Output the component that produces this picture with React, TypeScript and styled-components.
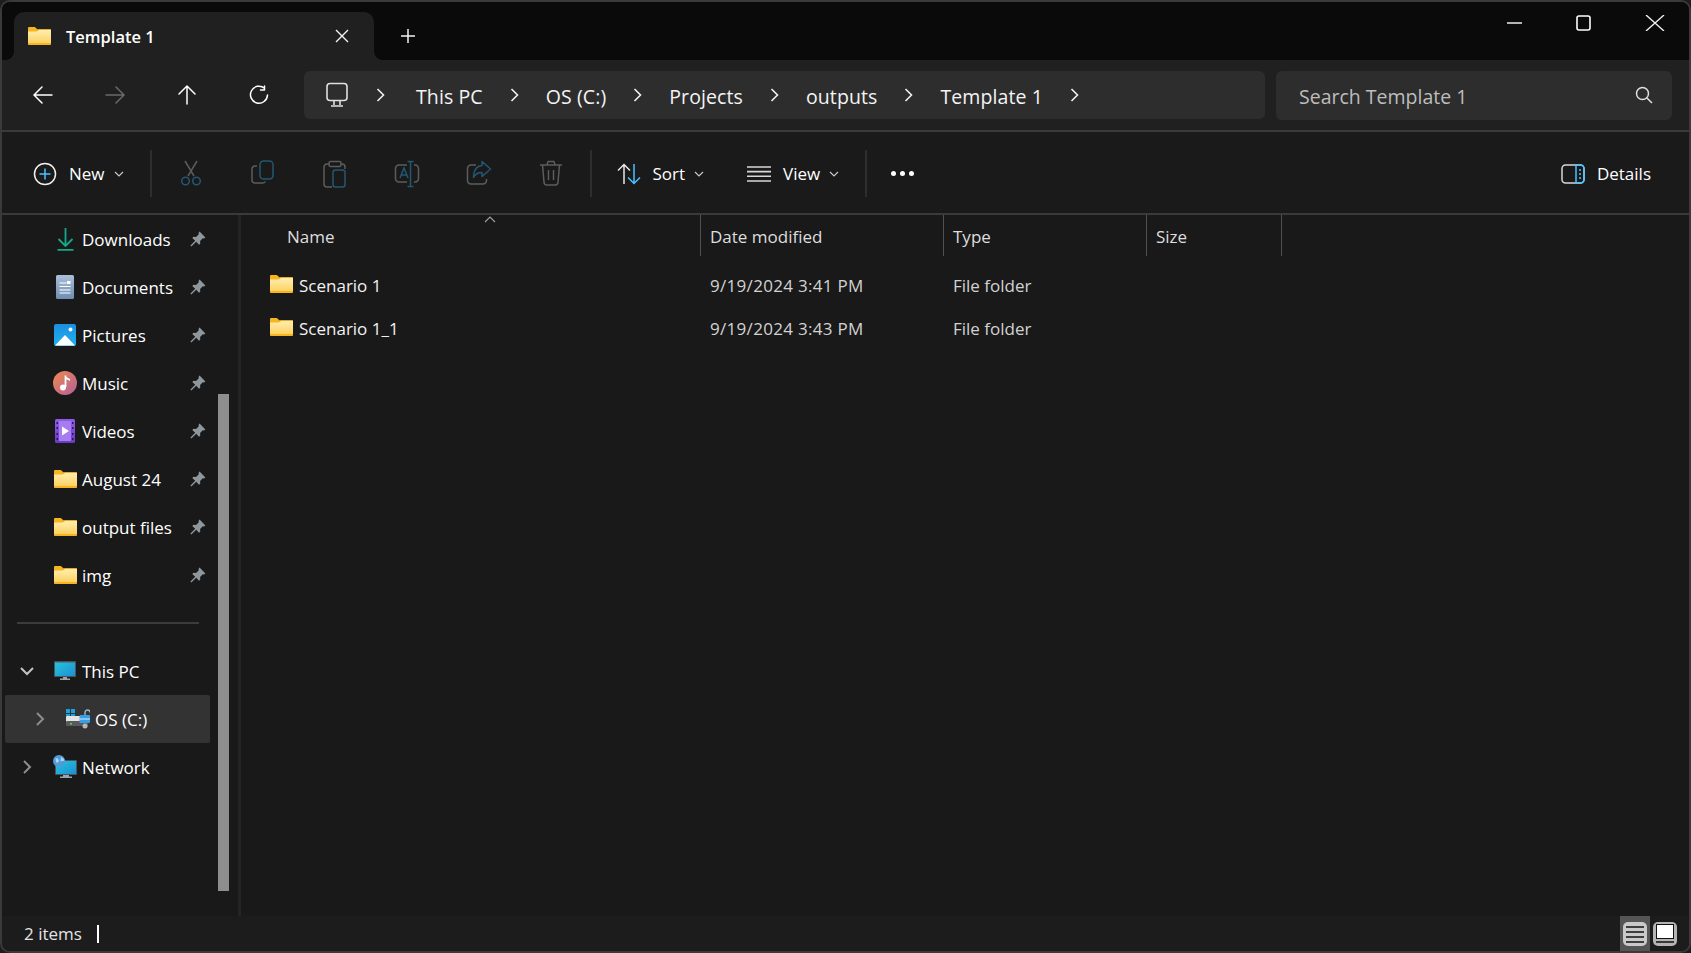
import styled, { createGlobalStyle } from 'styled-components'

const GlobalStyle = createGlobalStyle`
  html, body {
    margin: 0;
    background: #1d1d1d;
  }
  * {
    box-sizing: border-box;
  }
`

const Window = styled.div`
  height: 100vh;
  display: flex;
  flex-direction: column;
  border: 2px solid #3a3a3a;
  border-radius: 10px;
  overflow: hidden;
  background: #191919;
  color: #fff;
  font-family: 'Open Sans', 'Noto Sans', sans-serif;
`

const TitleBar = styled.div`
  height: 58px;
  flex: none;
  display: flex;
  align-items: flex-end;
  padding: 0 24px 0 12px;
  background: #0a0a0a;
`

const Tab = styled.div`
  position: relative;
  width: 360px;
  height: 48px;
  display: flex;
  align-items: center;
  gap: 15px;
  padding: 0 25px 0 14px;
  background: #202020;
  border-radius: 10px 10px 0 0;
  font-size: 16.5px;
  font-weight: 600;

  &::before,
  &::after {
    content: '';
    position: absolute;
    bottom: 0;
    width: 8px;
    height: 8px;
  }
  &::before {
    left: -8px;
    background: radial-gradient(circle at 0 0, transparent 7.5px, #202020 8px);
  }
  &::after {
    right: -8px;
    background: radial-gradient(circle at 100% 0, transparent 7.5px, #202020 8px);
  }
`

const TabClose = styled.span`
  margin-left: auto;
  display: flex;
`

const NewTab = styled.span`
  display: flex;
  margin: 0 0 17px 27px;
`

const WindowControls = styled.div`
  align-self: flex-start;
  margin: 12px 0 0 auto;
  display: flex;
  align-items: center;
  gap: 54px;
`

const NavBar = styled.div`
  height: 72px;
  flex: none;
  display: flex;
  align-items: center;
  padding: 0 17px 0 5px;
  background: #202020;
  border-bottom: 2px solid #3a3a3a;
`

const NavButton = styled.button<{ $off?: boolean }>`
  width: 72px;
  height: 48px;
  flex: none;
  display: flex;
  align-items: center;
  justify-content: center;
  padding: 0;
  border: 0;
  background: none;
  color: ${({ $off }) => ($off ? '#6a6a6a' : '#fff')};
`

const AddressBar = styled.div`
  flex: 1;
  height: 48px;
  margin-left: 9px;
  display: flex;
  align-items: center;
  gap: 27px;
  padding-left: 21px;
  background: #2d2d2d;
  border-radius: 6px;
  font-size: 19.5px;
  letter-spacing: 0.1px;
  color: #f4f4f4;
`

const RootChevron = styled.span`
  display: flex;
  margin-right: 4px;
`

const CrumbLabel = styled.span`
  padding-top: 2px;
`

const SearchBox = styled.div`
  width: 396px;
  height: 49px;
  flex: none;
  margin-left: 11px;
  display: flex;
  align-items: center;
  justify-content: space-between;
  padding: 0 19px 0 23px;
  background: #2d2d2d;
  border-radius: 6px;
  font-size: 19.5px;
  color: #bdbdbd;
`

const SearchLabel = styled.span`
  padding-top: 2px;
`

const Toolbar = styled.div`
  height: 83px;
  flex: none;
  display: flex;
  align-items: center;
  padding-top: 2px;
  background: #1a1a1a;
  border-bottom: 2px solid #3a3a3a;
  font-size: 17px;
`

const ToolButton = styled.div<{ $pad: string }>`
  display: flex;
  align-items: center;
  gap: 12px;
  padding: ${({ $pad }) => $pad};
`

const ActionButton = styled.div`
  width: 72px;
  display: flex;
  justify-content: center;
`

const ActionGroup = styled.div`
  display: flex;
  margin: 0 3px;
`

const Separator = styled.div`
  width: 2px;
  height: 47px;
  flex: none;
  background: #2e2e2e;
`

const Dots = styled.div`
  display: flex;
  gap: 4px;
  margin-left: 24px;
  span {
    width: 5px;
    height: 5px;
    border-radius: 50%;
    background: #fff;
  }
`

const DetailsButton = styled(ToolButton)`
  margin-left: auto;
`

const Body = styled.div`
  flex: 1;
  min-height: 0;
  display: flex;
`

const Sidebar = styled.nav`
  position: relative;
  width: 236px;
  flex: none;
  overflow: hidden;
  background: #191919;
  font-size: 17px;
`

const TreeRow = styled.div<{ $indent: number; $active?: boolean }>`
  width: 205px;
  height: 48px;
  margin-left: 3px;
  display: flex;
  align-items: center;
  padding: 0 4px 0 ${({ $indent }) => $indent}px;
  border-radius: 2px;
  background: ${({ $active }) => ($active ? '#333' : 'transparent')};
`

const Expander = styled.span`
  width: 24px;
  flex: none;
  display: flex;
  justify-content: center;
  color: #8d8d8d;
`

const TreeIcon = styled.span`
  width: 24px;
  height: 24px;
  flex: none;
  margin: 0 5px 0 14px;
  display: flex;
  align-items: center;
  justify-content: center;
`

const TreeLabel = styled.span`
  flex: 1;
  white-space: nowrap;
`

const TreeDivider = styled.div`
  height: 2px;
  margin: 23px 39px 23px 15px;
  background: #3c3c3c;
`

const SideScroll = styled.div`
  position: absolute;
  left: 216px;
  top: 179px;
  width: 11px;
  height: 497px;
  background: #8e8e8e;
`

const PaneGap = styled.div`
  width: 3px;
  flex: none;
  background: #242424;
`

const FileList = styled.main`
  flex: 1;
  min-width: 0;
  font-size: 17px;
`

const columns = '460px 243px 203px 135px'

const HeaderRow = styled.div`
  height: 41px;
  display: grid;
  grid-template-columns: ${columns};
  color: #dedede;
`

const HeaderCell = styled.div<{ $first?: boolean }>`
  position: relative;
  display: flex;
  align-items: center;
  padding: 2px 0 0 ${({ $first }) => ($first ? 46 : 9)}px;
  border-right: 1px solid #505050;
`

const SortCaret = styled.span`
  position: absolute;
  left: 243px;
  top: 0;
  display: flex;
  color: #a0a0a0;
`

const FileRows = styled.div`
  padding-top: 8px;
`

const FileRow = styled.div`
  height: 43px;
  display: grid;
  grid-template-columns: ${columns};
  align-items: center;
`

const NameCell = styled.div`
  display: flex;
  align-items: center;
  gap: 6px;
  padding-left: 29px;
  color: #f2f2f2;

  svg {
    margin-bottom: 4px;
  }
`

const MetaCell = styled.div<{ $date?: boolean }>`
  padding-left: 9px;
  color: #d2d2d2;
  letter-spacing: ${({ $date }) => ($date ? '0.3px' : '0')};
`

const StatusBar = styled.div`
  height: 35px;
  flex: none;
  display: flex;
  align-items: center;
  padding: 0 9px 0 22px;
  background: #1c1c1c;
  font-size: 17px;
  color: #e4e4e4;
`

const TextCaret = styled.span`
  width: 2px;
  height: 18px;
  margin-left: 15px;
  background: #fff;
`

const ViewToggles = styled.div`
  margin-left: auto;
  height: 100%;
  display: flex;
  align-items: center;
`

const ViewToggle = styled.span<{ $on?: boolean }>`
  height: 100%;
  padding: 0 3px;
  display: flex;
  align-items: center;
  background: ${({ $on }) => ($on ? '#555' : 'transparent')};
`

const stroke = {
  fill: 'none',
  stroke: 'currentColor',
  strokeWidth: 1.5,
  strokeLinecap: 'round' as const,
  strokeLinejoin: 'round' as const,
}

const Folder = ({ w = 23 }: { w?: number }) => (
  <svg width={w} height={(w * 18) / 23} viewBox="0 0 23 18">
    <defs>
      <linearGradient id="fold" x1="0" y1="0" x2="0" y2="1">
        <stop offset="0" stopColor="#ffeeb0" />
        <stop offset="1" stopColor="#fdd263" />
      </linearGradient>
    </defs>
    <path d="M0 1.2C0 .5.5 0 1.2 0h5.6l2.6 2.2H22c.6 0 1 .4 1 1V5H0z" fill="#f6b51e" />
    <path d="M0 17V4l8.4-.1 2.5-1.7H22c.6 0 1 .4 1 1V17c0 .6-.4 1-1 1H1c-.6 0-1-.4-1-1z" fill="#f6b51e" />
    <path d="M0 16V4.6h8.6l2.5-1.6H23v13z" fill="url(#fold)" />
  </svg>
)

const Chevron = () => (
  <svg width="9" height="16" viewBox="0 0 9 16" style={{ flex: 'none' }}>
    <path d="M1.5 2l6 6-6 6" fill="none" stroke="#f0f0f0" strokeWidth="1.6" />
  </svg>
)

const SmallCaret = ({ color = '#c8c8c8' }: { color?: string }) => (
  <svg width="10" height="8" viewBox="0 0 10 8" style={{ marginLeft: -3 }}>
    <path d="M1 2l4 4 4-4" fill="none" stroke={color} strokeWidth="1.2" />
  </svg>
)

const Pin = () => (
  <svg width="16" height="16" viewBox="0 0 16 16" style={{ flex: 'none' }}>
    <path d="M9.6.6l5.8 5.8-1.5 1.1-1.1-.3-2.7 2.7.2 2.6-1.2 1.2-2.9-2.9L1.4 15.6.4 14.6l4.8-4.8L2.3 6.9l1.2-1.2 2.6.2 2.7-2.7-.3-1.1z" fill="#8f979e" />
  </svg>
)

const Computer = () => (
  <svg width="24" height="26" viewBox="0 0 24 26" fill="none" stroke="#e0e0e0" strokeWidth="1.6" strokeLinejoin="round">
    <rect x="2" y="1.5" width="20" height="17" rx="3" />
    <path d="M9 19v4M15 19v4M6 24h12" />
  </svg>
)

const Cut = () => (
  <svg width="22" height="26" viewBox="0 0 22 26" fill="none" strokeWidth="1.5">
    <path d="M5 1l9 15M17 1L8 16" stroke="#5c5c5c" />
    <circle cx="5.5" cy="21" r="3.8" stroke="#235772" />
    <circle cx="16.5" cy="21" r="3.8" stroke="#235772" />
  </svg>
)

const Copy = () => (
  <svg width="24" height="26" viewBox="0 0 24 26" fill="none" strokeWidth="1.5">
    <path d="M6 6H4a3 3 0 00-3 3v11a3 3 0 003 3h8a3 3 0 002.5-1.5" stroke="#5c5c5c" />
    <rect x="9" y="1" width="13" height="18" rx="3.5" stroke="#235772" />
  </svg>
)

const Paste = () => (
  <svg width="24" height="28" viewBox="0 0 24 28" fill="none" strokeWidth="1.5">
    <path d="M6 4H4a3 3 0 00-3 3v17a3 3 0 003 3h5M18 4h1a3 3 0 013 3v2" stroke="#5c5c5c" />
    <rect x="6" y="1.5" width="12" height="5" rx="1.5" stroke="#5c5c5c" />
    <rect x="10" y="10" width="12" height="17" rx="2.5" stroke="#235772" />
  </svg>
)

const Rename = () => (
  <svg width="26" height="28" viewBox="0 0 26 28" fill="none" strokeWidth="1.5">
    <path d="M13 5H5a3.5 3.5 0 00-3.5 3.5v10A3.5 3.5 0 005 22h8M20 5h1a3.5 3.5 0 013.5 3.5v10A3.5 3.5 0 0121 22h-1" stroke="#5c5c5c" />
    <path d="M6 18l4-10 4 10M7.5 15h5M16.5 2v24M13.5 1.5h6M13.5 26.5h6" stroke="#235772" />
  </svg>
)

const Share = () => (
  <svg width="26" height="26" viewBox="0 0 26 26" fill="none" strokeWidth="1.5" strokeLinejoin="round">
    <path d="M10 5H5a3.5 3.5 0 00-3.5 3.5v12A3.5 3.5 0 005 24h12a3.5 3.5 0 003.5-3.5V19" stroke="#5c5c5c" />
    <path d="M16 1.5l8.5 7.5-8.5 7.5v-4c-4 0-6.5 1-8.5 5 0-7 3-11.500 8.500-12z" stroke="#235772" />
  </svg>
)

const Trash = () => (
  <svg width="24" height="26" viewBox="0 0 24 26" fill="none" stroke="#5c5c5c" strokeWidth="1.5" strokeLinejoin="round">
    <path d="M1 5h22M8 5l1-3.500h6L16 5M3.500 5L5 22a3 3 0 003 3h8a3 3 0 003-3l1.500-17M9.500 10v10M14.500 10v10" />
  </svg>
)

const Downloads = () => (
  <svg width="17" height="24" viewBox="0 0 17 24" fill="none" stroke="#15a98b" strokeWidth="1.8">
    <path d="M8.500 1v18M1.500 12l7 7 7-7" />
    <path d="M.5 22.800h16" />
  </svg>
)

const Documents = () => (
  <svg width="18" height="24" viewBox="0 0 18 24">
    <defs>
      <linearGradient id="docs" x1="0" y1="0" x2="0" y2="1">
        <stop offset="0" stopColor="#a9c0d8" />
        <stop offset="1" stopColor="#6d8db0" />
      </linearGradient>
    </defs>
    <rect width="18" height="24" rx="1.500" fill="url(#docs)" />
    <path d="M3.500 8h7M3.500 11.500h11M3.500 15h11M3.500 18h11" stroke="#fff" strokeWidth="1" />
    <rect x="11" y="6" width="3.500" height="3" fill="#fff" />
  </svg>
)

const Pictures = () => (
  <svg width="22" height="22" viewBox="0 0 22 22">
    <defs>
      <linearGradient id="pics" x1="0" y1="0" x2="0" y2="1">
        <stop offset="0" stopColor="#1c8ee0" />
        <stop offset="1" stopColor="#1fb2ef" />
      </linearGradient>
    </defs>
    <rect width="22" height="22" rx="2" fill="url(#pics)" />
    <path d="M1 21.500L11 11l10 10.500z" fill="#fff" />
    <circle cx="16.500" cy="5.500" r="2" fill="#fff" />
  </svg>
)

const Music = () => (
  <svg width="24" height="24" viewBox="0 0 24 24">
    <defs>
      <linearGradient id="mus" x1="0" y1="0" x2="1" y2="1">
        <stop offset="0" stopColor="#ee8a4e" />
        <stop offset="1" stopColor="#b25f9c" />
      </linearGradient>
    </defs>
    <circle cx="12" cy="12" r="12" fill="url(#mus)" />
    <path d="M12.500 4.500v11.500" stroke="#fff" strokeWidth="1.800" />
    <path d="M12.500 4.500c.5 2.500 3.500 2.500 4.500 3.500v2c-1.500-1-3.500-1.500-4.500-2z" fill="#fff" />
    <circle cx="10" cy="16.500" r="3" fill="#fff" />
  </svg>
)

const Videos = () => (
  <svg width="20" height="24" viewBox="0 0 20 24">
    <defs>
      <linearGradient id="vid" x1="0" y1="0" x2="0" y2="1">
        <stop offset="0" stopColor="#8f5ce8" />
        <stop offset="1" stopColor="#6a3ac4" />
      </linearGradient>
    </defs>
    <rect width="20" height="24" rx="1.500" fill="url(#vid)" />
    <rect x="4" y="2" width="12" height="20" fill="#a77cf0" />
    <path d="M7 7.500l7 4.500-7 4.500z" fill="#fff" />
    <path d="M1.500 3h1.500v2H1.500zM1.500 8h1.500v2H1.500zM1.500 14h1.500v2H1.500zM1.500 19h1.500v2H1.500zM17 3h1.500v2H17zM17 8h1.500v2H17zM17 14h1.500v2H17zM17 19h1.500v2H17z" fill="#2b1659" />
  </svg>
)

const ThisPC = () => (
  <svg width="22" height="20" viewBox="0 0 22 20">
    <defs>
      <linearGradient id="mon" x1="0" y1="0" x2="1" y2="1">
        <stop offset="0" stopColor="#27c4dd" />
        <stop offset="1" stopColor="#1d8fd2" />
      </linearGradient>
    </defs>
    <rect width="22" height="16" rx="1" fill="#45565f" />
    <rect x="1" y="1.500" width="20" height="13.500" fill="url(#mon)" />
    <path d="M9 16h4v1.500h3V19H6v-1.500h3z" fill="#9aa5ab" />
  </svg>
)

const OSDrive = () => (
  <svg width="24" height="20" viewBox="0 0 24 20">
    <path d="M0 0h4v4H0zM5 0h4v4H5zM0 5h4v2H0zM5 5h4v2H5z" fill="#1ba1e2" />
    <rect x="0" y="7" width="22" height="9" rx="1" fill="#e4e4e4" />
    <rect x="0" y="12" width="22" height="5" rx="1" fill="#5a5a5a" />
    <rect x="4" y="14" width="2" height="1.500" fill="#3ce05a" />
    <path d="M19 7V3.500a2.500 2.500 0 015 0" fill="none" stroke="#9fb4c2" strokeWidth="1.400" />
    <rect x="13.500" y="6" width="10.500" height="8" rx="1" fill="#36a0e6" />
    <rect x="13.500" y="9.500" width="10.500" height="1" fill="#d8eefc" />
    <circle cx="19" cy="17" r="2.500" fill="#b8b8b8" />
  </svg>
)

const Network = () => (
  <svg width="24" height="24" viewBox="0 0 24 24">
    <defs>
      <linearGradient id="net" x1="0" y1="0" x2="1" y2="1">
        <stop offset="0" stopColor="#27c4dd" />
        <stop offset="1" stopColor="#1d8fd2" />
      </linearGradient>
    </defs>
    <rect x="2" y="5" width="22" height="15" rx="1" fill="#45565f" />
    <rect x="3" y="6" width="20" height="13" fill="url(#net)" />
    <path d="M10 20h6v1.500h3V23H7v-1.500h3z" fill="#9aa5ab" />
    <circle cx="6" cy="6" r="6" fill="#4f9bd9" />
    <path d="M2.500 3c2 0 3 1 3.500 2.500S4 8 3 7.500M8 1.500c.5 1.500 3 2 3.500 3.500-1 2-3.500 0-4 2" fill="#a8d5f2" />
  </svg>
)

const pinned = [
  { label: 'Downloads', icon: <Downloads /> },
  { label: 'Documents', icon: <Documents /> },
  { label: 'Pictures', icon: <Pictures /> },
  { label: 'Music', icon: <Music /> },
  { label: 'Videos', icon: <Videos /> },
  { label: 'August 24', icon: <Folder /> },
  { label: 'output files', icon: <Folder /> },
  { label: 'img', icon: <Folder /> },
]

const crumbs = ['This PC', 'OS (C:)', 'Projects', 'outputs', 'Template 1']

const files = [
  { name: 'Scenario 1', date: '9/19/2024 3:41 PM' },
  { name: 'Scenario 1_1', date: '9/19/2024 3:43 PM' },
]

export default function App() {
  return (
    <>
      <GlobalStyle />
      <Window>
        <TitleBar>
          <Tab>
            <Folder />
            Template 1
            <TabClose>
              <svg width="14" height="14" viewBox="0 0 14 14" stroke="#f4f4f4" strokeWidth="1.400">
                <path d="M1 1l12 12M13 1L1 13" />
              </svg>
            </TabClose>
          </Tab>
          <NewTab>
            <svg width="14" height="14" viewBox="0 0 14 14" stroke="#f4f4f4" strokeWidth="1.500">
              <path d="M7 0v14M0 7h14" />
            </svg>
          </NewTab>
          <WindowControls>
            <svg width="15" height="18" viewBox="0 0 15 18" stroke="#eee" strokeWidth="1.500">
              <path d="M0 9h15" />
            </svg>
            <svg width="15" height="16" viewBox="0 0 15 16" fill="none" stroke="#fff" strokeWidth="1.600">
              <rect x="1" y="1" width="13" height="14" rx="2" />
            </svg>
            <svg width="20" height="16" viewBox="0 0 20 16" stroke="#eee" strokeWidth="1.400">
              <path d="M1 0l18 16M19 0L1 16" />
            </svg>
          </WindowControls>
        </TitleBar>

        <NavBar>
          <NavButton>
            <svg width="20" height="20" viewBox="0 0 20 20" {...stroke}>
              <path d="M19 10H1.500M9 2l-8 8 8 8" />
            </svg>
          </NavButton>
          <NavButton $off>
            <svg width="20" height="20" viewBox="0 0 20 20" {...stroke}>
              <path d="M1 10h17.500M11 2l8 8-8 8" />
            </svg>
          </NavButton>
          <NavButton>
            <svg width="20" height="20" viewBox="0 0 20 20" {...stroke}>
              <path d="M10 19V1.500M2 9l8-8 8 8" />
            </svg>
          </NavButton>
          <NavButton>
            <svg width="20" height="20" viewBox="0 0 20 20" {...stroke}>
              <path d="M15.500 3.200A8.500 8.500 0 1018.500 10M15.500 1v4h-4" />
            </svg>
          </NavButton>
          <AddressBar>
            <Computer />
            <RootChevron>
              <Chevron />
            </RootChevron>
            {crumbs.map((crumb) => (
              <Crumb key={crumb} label={crumb} />
            ))}
          </AddressBar>
          <SearchBox>
            <SearchLabel>Search Template 1</SearchLabel>
            <svg width="18" height="18" viewBox="0 0 18 18" fill="none" stroke="#e0e0e0" strokeWidth="1.500">
              <circle cx="7.500" cy="7.500" r="6" />
              <path d="M12 12l5 5" />
            </svg>
          </SearchBox>
        </NavBar>

        <Toolbar>
          <ToolButton $pad="0 26px 0 31px">
            <svg width="24" height="24" viewBox="0 0 24 24" fill="none" strokeWidth="1.500">
              <circle cx="12" cy="12" r="10.500" stroke="#f0f0f0" />
              <path d="M12 6.500v11M6.500 12h11" stroke="#4cc2ff" />
            </svg>
            New
            <SmallCaret />
          </ToolButton>
          <Separator />
          <ActionGroup>
            <ActionButton><Cut /></ActionButton>
            <ActionButton><Copy /></ActionButton>
            <ActionButton><Paste /></ActionButton>
            <ActionButton><Rename /></ActionButton>
            <ActionButton><Share /></ActionButton>
            <ActionButton><Trash /></ActionButton>
          </ActionGroup>
          <Separator />
          <ToolButton $pad="0 22px 0 25px">
            <svg width="24" height="22" viewBox="0 0 24 22" fill="none" strokeWidth="1.500">
              <path d="M7 21V1.500M1 7.500l6-6 6 6" stroke="#e8e8e8" />
              <path d="M17 1v19.500M11 14.500l6 6 6-6" stroke="#4cc2ff" />
            </svg>
            Sort
            <SmallCaret />
          </ToolButton>
          <ToolButton $pad="0 26px 0 21px">
            <svg width="24" height="16" viewBox="0 0 24 16" stroke="#d8d8d8" strokeWidth="1.600">
              <path d="M0 1h24M0 5.600h24M0 10.300h24M0 15h24" />
            </svg>
            View
            <SmallCaret />
          </ToolButton>
          <Separator />
          <Dots>
            <span />
            <span />
            <span />
          </Dots>
          <DetailsButton $pad="0 38px 0 0">
            <svg width="24" height="20" viewBox="0 0 24 20" fill="none" strokeWidth="1.500">
              <rect x="1" y="1" width="22" height="18" rx="3.500" stroke="#d8d8d8" />
              <path d="M15 1h4.500A3.500 3.500 0 0123 4.500v11a3.500 3.500 0 01-3.500 3.500H15z" stroke="#4cc2ff" />
              <path d="M18 6h2M18 10h2M18 14h2" stroke="#4cc2ff" />
            </svg>
            Details
          </DetailsButton>
        </Toolbar>

        <Body>
          <Sidebar>
            {pinned.map((item) => (
              <TreeRow key={item.label} $indent={10}>
                <Expander />
                <TreeIcon>{item.icon}</TreeIcon>
                <TreeLabel>{item.label}</TreeLabel>
                <Pin />
              </TreeRow>
            ))}
            <TreeDivider />
            <TreeRow $indent={10}>
              <Expander>
                <svg width="14" height="9" viewBox="0 0 14 9" fill="none" stroke="#c4c4c4" strokeWidth="2">
                  <path d="M1 1l6 6 6-6" />
                </svg>
              </Expander>
              <TreeIcon><ThisPC /></TreeIcon>
              <TreeLabel>This PC</TreeLabel>
            </TreeRow>
            <TreeRow $indent={23} $active>
              <Expander>
                <svg width="9" height="14" viewBox="0 0 9 14" fill="none" stroke="#8d8d8d" strokeWidth="2">
                  <path d="M1 1l6 6-6 6" />
                </svg>
              </Expander>
              <TreeIcon><OSDrive /></TreeIcon>
              <TreeLabel>OS (C:)</TreeLabel>
            </TreeRow>
            <TreeRow $indent={10}>
              <Expander>
                <svg width="9" height="14" viewBox="0 0 9 14" fill="none" stroke="#8d8d8d" strokeWidth="2">
                  <path d="M1 1l6 6-6 6" />
                </svg>
              </Expander>
              <TreeIcon><Network /></TreeIcon>
              <TreeLabel>Network</TreeLabel>
            </TreeRow>
            <SideScroll />
          </Sidebar>
          <PaneGap />
          <FileList>
            <HeaderRow>
              <HeaderCell $first>
                Name
                <SortCaret>
                  <svg width="12" height="8" viewBox="0 0 12 8" fill="none" stroke="currentColor" strokeWidth="1.100">
                    <path d="M1 7l5-5 5 5" />
                  </svg>
                </SortCaret>
              </HeaderCell>
              <HeaderCell>Date modified</HeaderCell>
              <HeaderCell>Type</HeaderCell>
              <HeaderCell>Size</HeaderCell>
            </HeaderRow>
            <FileRows>
              {files.map((file) => (
                <FileRow key={file.name}>
                  <NameCell>
                    <Folder />
                    {file.name}
                  </NameCell>
                  <MetaCell $date>{file.date}</MetaCell>
                  <MetaCell>File folder</MetaCell>
                </FileRow>
              ))}
            </FileRows>
          </FileList>
        </Body>

        <StatusBar>
          2 items
          <TextCaret />
          <ViewToggles>
            <ViewToggle $on>
              <svg width="24" height="24" viewBox="0 0 24 24">
                <rect width="24" height="24" rx="5" fill="#c9c9c9" />
                <path d="M3 5h18M3 10h18M3 15h18M3 20h18" stroke="#111" strokeWidth="1.500" />
              </svg>
            </ViewToggle>
            <ViewToggle>
              <svg width="24" height="24" viewBox="0 0 24 24">
                <rect width="24" height="24" rx="5" fill="#b4b4b4" />
                <rect x="3.500" y="2.500" width="17" height="14" fill="#fff" stroke="#111" />
                <path d="M3 20h18" stroke="#111" strokeWidth="1.500" />
              </svg>
            </ViewToggle>
          </ViewToggles>
        </StatusBar>
      </Window>
    </>
  )
}

function Crumb({ label }: { label: string }) {
  return (
    <>
      <CrumbLabel>{label}</CrumbLabel>
      <Chevron />
    </>
  )
}
